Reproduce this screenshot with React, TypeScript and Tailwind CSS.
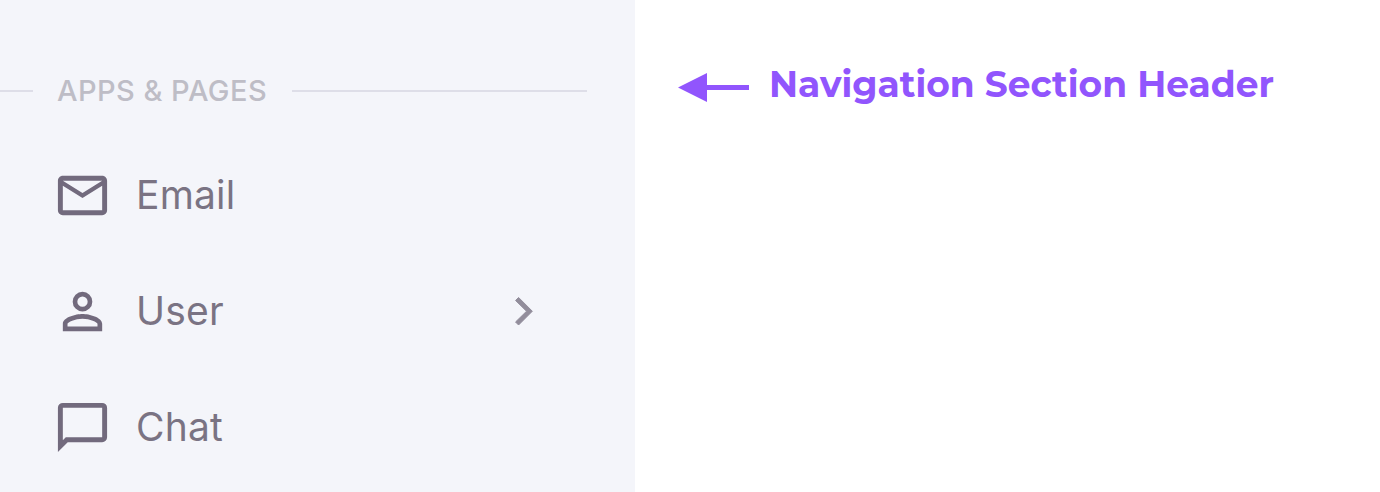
import React from "react";

const MAIL = "M22 6c0-1.100-.9-2-2-2H4c-1.100 0-2 .9-2 2v12c0 1.100.9 2 2 2h16c1.100 0 2-.9 2-2V6m-2 0l-8 5l-8-5h16m0 12H4V8l8 5l8-5v10z";
const USER = "M12 4a4 4 0 0 1 4 4a4 4 0 0 1-4 4a4 4 0 0 1-4-4a4 4 0 0 1 4-4m0 1.900a2.100 2.100 0 1 0 0 4.200a2.100 2.100 0 0 0 0-4.200m0 7.100c2.670 0 8 1.330 8 4v3H4v-3c0-2.670 5.330-4 8-4m0 1.900c-2.970 0-6.100 1.460-6.100 2.100v1.100h12.200V17c0-.64-3.130-2.100-6.100-2.100z";
const CHAT = "M20 2H4a2 2 0 0 0-2 2v18l4-4h14a2 2 0 0 0 2-2V4a2 2 0 0 0-2-2m0 14H5.200L4 17.200V4h16v12z";

function Item({ label, path, expandable }: { label: string; path: string; expandable?: boolean }) {
  return (
    <li className="flex h-[116px] items-center pl-[53px] pr-[82px]">
      <svg viewBox="0 0 24 24" className="size-[59px] shrink-0 fill-[#726a7d]"><path d={path} /></svg>
      <span className="ml-[24px] text-[39px] leading-[48px] tracking-[0.2px] text-[#7a7383]">{label}</span>
      {expandable && (
        <svg viewBox="0 0 24 24" className="ml-auto size-[58px] fill-[#928d9b] stroke-[#928d9b] [stroke-linejoin:round] [stroke-width:0.4]">
          <path d="M8.500 16.550L13.050 12.100L8.500 7.650L9.750 6.400l5.700 5.700l-5.700 5.700l-1.250-1.250z" />
        </svg>
      )}
    </li>
  );
}

export default function App() {
  return (
    <div className="flex h-[492px] w-[1380px] overflow-hidden bg-white">
      <nav className="w-[635px] bg-[#f4f5fa] pt-[68px] font-['Inter',sans-serif]">
        <div className="flex h-[46px] items-center">
          <span className="h-[2px] w-[33px] bg-[#dedee8]" />
          <h2 className="ml-[24px] w-[211px] whitespace-nowrap text-[29px] font-medium leading-[44px] tracking-[0.450px] text-[#bebdc6]">APPS &amp; PAGES</h2>
          <span className="ml-[24px] h-[2px] w-[295px] bg-[#dedee8]" />
        </div>
        <ul className="pt-[23px]">
          <Item label="Email" path={MAIL} />
          <Item label="User" path={USER} expandable />
          <Item label="Chat" path={CHAT} />
        </ul>
      </nav>
      <aside className="mt-[60px] flex h-[48px] items-center pl-[43px]">
        <svg viewBox="0 0 71 30" className="mt-[7px] h-[30px] w-[71px] fill-[#9155fd]"><path d="M0 14.500L29 0v12h42v5H29v12z" /></svg>
        <p className="ml-[20px] whitespace-nowrap font-['Montserrat','Open_Sans',sans-serif] text-[36px] font-bold text-[#9155fd]">Navigation Section Header</p>
      </aside>
    </div>
  );
}
